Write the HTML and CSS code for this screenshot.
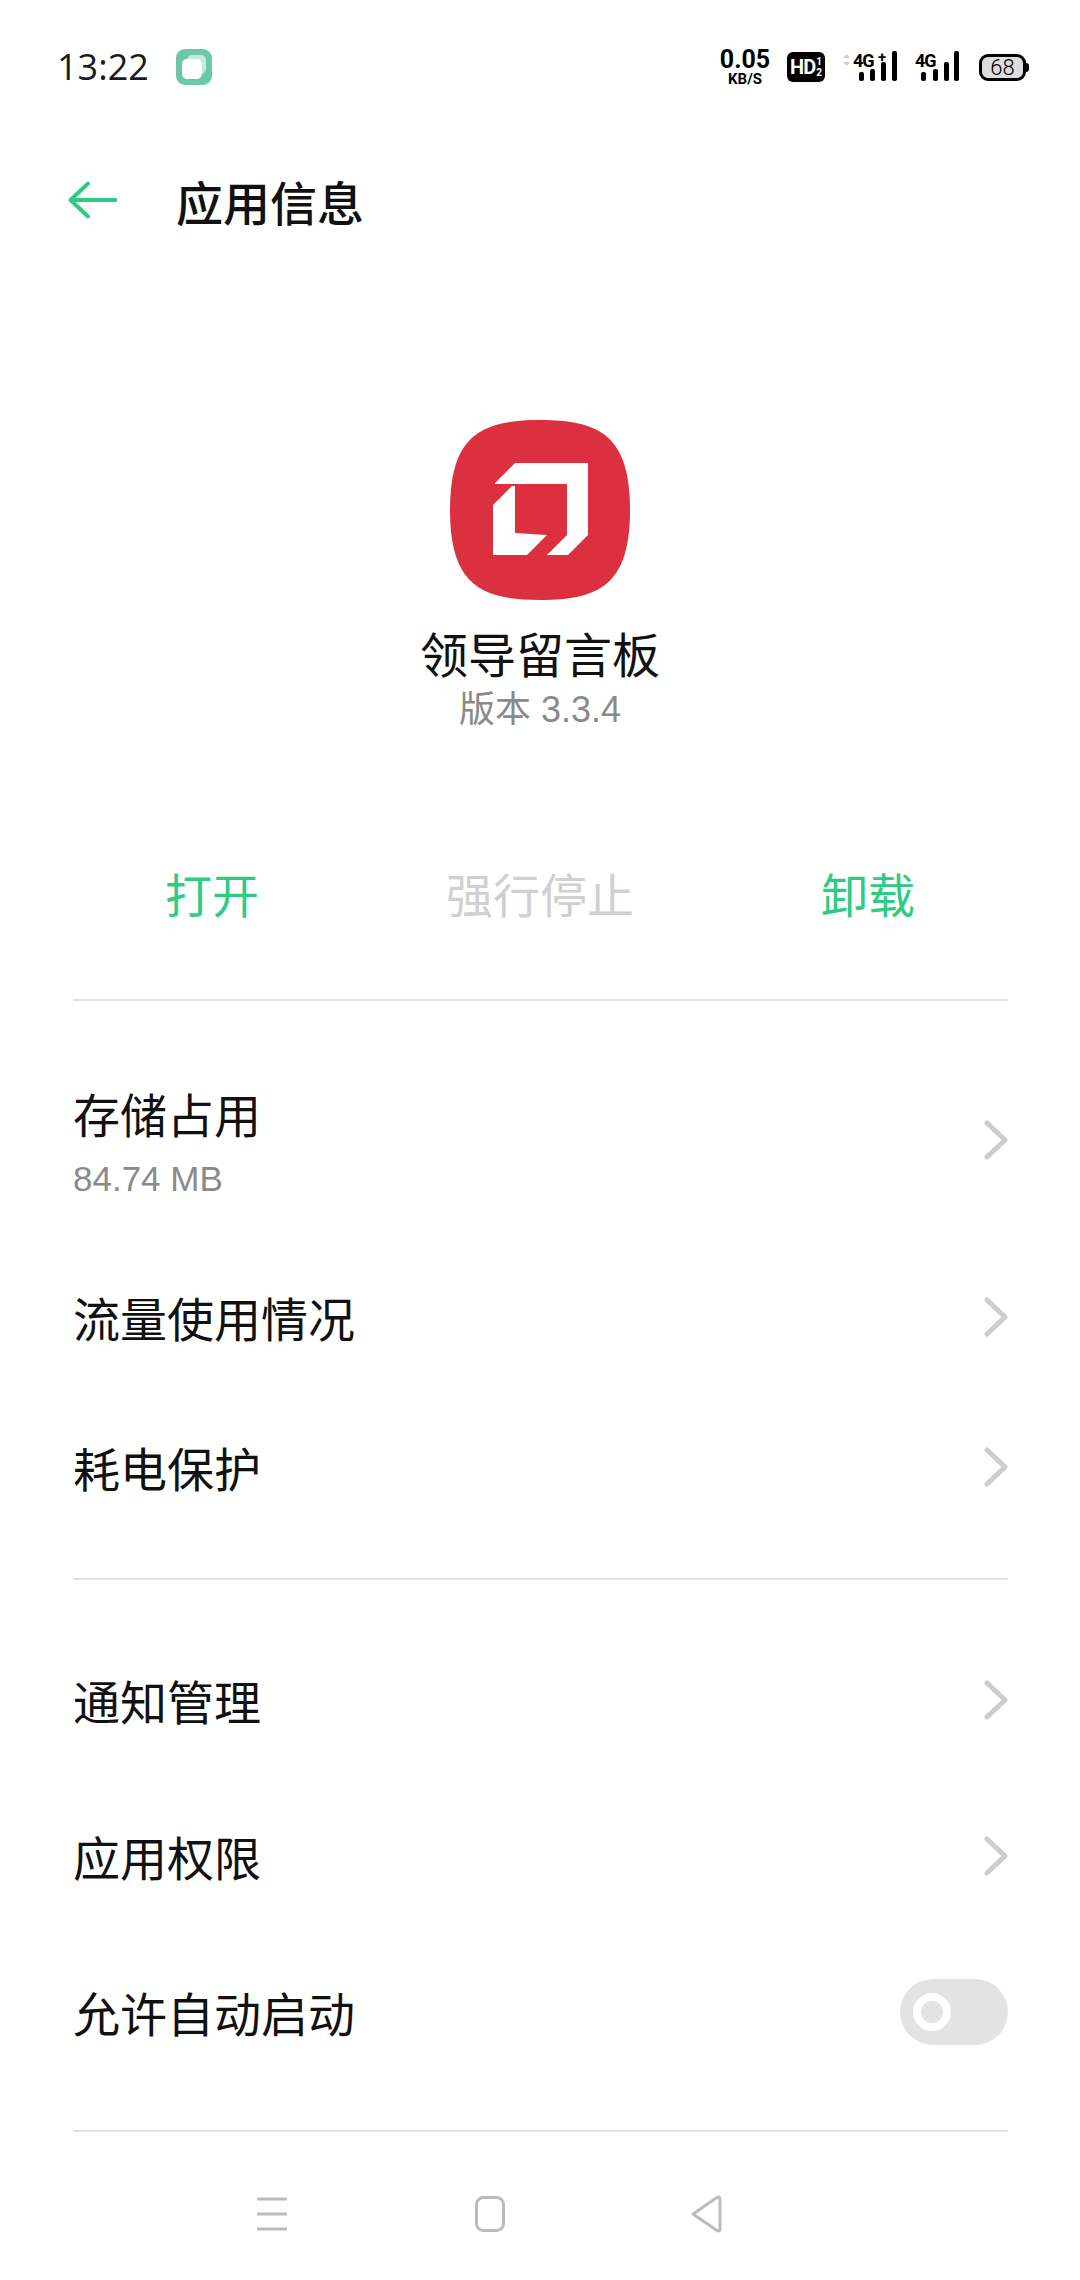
FILE: index.html
```html
<!DOCTYPE html>
<html lang="zh-CN">
<head>
    <meta charset="UTF-8">
    <meta name="viewport" content="width=device-width, initial-scale=1.0">
    <title>应用信息</title>
    <link rel="stylesheet" href="styles.css">
</head>
<body>

<div class="status">
    <div class="status-left">
        <span class="time">13:22</span>
        <svg class="notify" width="36" height="36" viewBox="0 0 36 36">
            <rect width="36" height="36" rx="9" fill="#6cc9a8"/>
            <rect x="11" y="6" width="19" height="19" rx="5" fill="#c5eadc"/>
            <rect x="6" y="10" width="20" height="20" rx="5" fill="#fff"/>
        </svg>
    </div>
    <div class="status-right">
        <div class="speed">
            <span class="speed-num">0.05</span>
            <span class="speed-unit">KB/S</span>
        </div>
        <div class="hd"><span>HD</span><span class="hd-frac"><i>1</i><i>2</i></span></div>
        <svg class="signal-one" width="56" height="32" viewBox="0 0 56 32">
            <path d="M1 7l3.5-4 3.5 4zM1 11l3.5 4 3.5-4z" fill="#ccc"/>
            <text x="11" y="16" class="net">4G</text>
            <text x="36" y="11" class="net plus">+</text>
            <rect x="17" y="21" width="5" height="9" rx="2"/>
            <rect x="28" y="18" width="5" height="12" rx="2"/>
            <rect x="39" y="11" width="5" height="19" rx="2"/>
            <rect x="50" y="0" width="5" height="30" rx="2"/>
        </svg>
        <svg class="signal-two" width="45" height="32" viewBox="0 0 45 32">
            <text x="0" y="16" class="net">4G</text>
            <rect x="6" y="21" width="5" height="9" rx="2"/>
            <rect x="18" y="18" width="5" height="12" rx="2"/>
            <rect x="29" y="11" width="5" height="19" rx="2"/>
            <rect x="39" y="0" width="5" height="30" rx="2"/>
        </svg>
        <div class="battery"><span>68</span></div>
    </div>
</div>

<header class="toolbar">
    <svg class="back" width="50" height="38" viewBox="0 0 50 38">
        <path d="M20 2.500L2.500 19L20 35.500M2.500 19H47.500" fill="none" stroke="#2ecb85" stroke-width="4" stroke-linecap="round" stroke-linejoin="round"/>
    </svg>
    <h1>应用信息</h1>
</header>

<section class="app-info">
    <svg class="app-icon" width="180" height="180" viewBox="0 0 180 180">
        <path d="M90 0C150 0 180 16 180 90C180 164 150 180 90 180C30 180 0 164 0 90C0 16 30 0 90 0Z" fill="#da3040"/>
        <path d="M45 63L65 43H138V115L118 135H97L117 115V64H45Z" fill="#fff"/>
        <path d="M43 85L62 66H65V113L97 115L77 135H43Z" fill="#fff"/>
    </svg>
    <div class="app-name">领导留言板</div>
    <div class="app-version">版本 3.3.4</div>
</section>

<div class="actions">
    <span class="action">打开</span>
    <span class="action disabled">强行停止</span>
    <span class="action">卸载</span>
</div>

<div class="group group-first">
    <div class="row row-storage">
        <div>
            <div class="label">存储占用</div>
            <div class="sub">84.74 MB</div>
        </div>
        <svg class="chevron" width="24" height="40" viewBox="0 0 24 40"><path d="M3 3L21 20L3 37"/></svg>
    </div>
    <div class="row row-traffic">
        <span class="label">流量使用情况</span>
        <svg class="chevron" width="24" height="40" viewBox="0 0 24 40"><path d="M3 3L21 20L3 37"/></svg>
    </div>
    <div class="row row-battery">
        <span class="label">耗电保护</span>
        <svg class="chevron" width="24" height="40" viewBox="0 0 24 40"><path d="M3 3L21 20L3 37"/></svg>
    </div>
</div>

<div class="group group-second">
    <div class="row">
        <span class="label">通知管理</span>
        <svg class="chevron" width="24" height="40" viewBox="0 0 24 40"><path d="M3 3L21 20L3 37"/></svg>
    </div>
    <div class="row">
        <span class="label">应用权限</span>
        <svg class="chevron" width="24" height="40" viewBox="0 0 24 40"><path d="M3 3L21 20L3 37"/></svg>
    </div>
    <div class="row">
        <span class="label">允许自动启动</span>
        <div class="toggle"><div class="knob"></div></div>
    </div>
</div>

<nav class="navbar">
    <svg width="30" height="34" viewBox="0 0 30 34"><path d="M0 2H30M0 17H30M0 32H30" fill="none" stroke="#bbb" stroke-width="3"/></svg>
    <svg width="30" height="36" viewBox="0 0 30 36"><rect x="1.500" y="1.500" width="27" height="33" rx="7" fill="none" stroke="#bbb" stroke-width="3"/></svg>
    <svg width="32" height="40" viewBox="0 0 32 40"><path d="M3 20L27 3.500Q30 2 30 5.500V34.500Q30 38 27 36.500Z" fill="none" stroke="#bbb" stroke-width="3" stroke-linejoin="round"/></svg>
</nav>

</body>
</html>
```

FILE: styles.css
```css
body {
    font-family: "Noto Sans CJK SC", "Noto Sans", sans-serif;
    margin: 0;
    padding: 0;
    background-color: #fff;
    color: #111;
    width: 1080px;
    height: 2280px;
    overflow: hidden;
}

/* status bar */
.status {
    height: 134px;
    padding: 0 54px 0 57px;
    display: flex;
    justify-content: space-between;
    align-items: center;
    box-sizing: border-box;
}
.status-left {
    display: flex;
    align-items: center;
}
.time {
    font-family: "Open Sans", sans-serif;
    font-size: 36px;
    line-height: 40px;
    width: 120px;
    color: #1a1a1a;
}
.notify {
    margin-left: -1px;
}
.status-right {
    display: flex;
    align-items: center;
    font-family: Roboto, sans-serif;
    color: #000;
}
.speed {
    display: flex;
    flex-direction: column;
    align-items: center;
    width: 48px;
    font-weight: 700;
}
.speed-num {
    font-size: 25px;
    line-height: 24px;
}
.speed-unit {
    font-size: 15px;
    line-height: 15px;
}
.hd {
    display: flex;
    align-items: center;
    justify-content: center;
    margin-left: 18px;
    width: 38px;
    height: 30px;
    background-color: #000;
    border-radius: 6px;
    color: #fff;
    font-size: 20px;
    font-weight: 700;
    letter-spacing: -1px;
}
.hd-frac {
    display: flex;
    flex-direction: column;
    margin-left: 1px;
    font-size: 10px;
    line-height: 11px;
    letter-spacing: 0;
}
.hd-frac i {
    font-style: normal;
}
.signal-one {
    margin-left: 17px;
}
.signal-two {
    margin-left: 17px;
}
.net {
    font-family: Roboto, sans-serif;
    font-size: 18px;
    font-weight: 700;
    letter-spacing: -1px;
}
.plus {
    font-size: 15px;
}
.battery {
    display: flex;
    align-items: center;
    justify-content: center;
    position: relative;
    margin-left: 19px;
    width: 47px;
    height: 27px;
    box-sizing: border-box;
    border: 3px solid #000;
    border-radius: 9px;
    background-color: #ddd;
    font-size: 22px;
    font-weight: 300;
}
.battery::after {
    content: "";
    position: absolute;
    right: -6px;
    top: 6px;
    width: 3px;
    height: 9px;
    background-color: #000;
    border-radius: 0 3px 3px 0;
}

/* toolbar */
.toolbar {
    height: 132px;
    padding-left: 68px;
    display: flex;
    align-items: center;
}
.toolbar h1 {
    margin: 0 0 0 58px;
    font-size: 47px;
    font-weight: 500;
    color: #111;
}

/* app header */
.app-info {
    padding-top: 154px;
    display: flex;
    flex-direction: column;
    align-items: center;
}
.app-icon {
    display: block;
}
.app-name {
    margin-top: 28px;
    font-size: 48px;
    line-height: 48px;
}
.app-version {
    margin-top: 14px;
    font-family: "Liberation Sans", "Noto Sans CJK SC", sans-serif;
    font-size: 36px;
    line-height: 40px;
    color: #8a8a8a;
}

.actions {
    margin-top: 112px;
    padding: 0 48px;
    height: 100px;
    display: grid;
    grid-template-columns: repeat(3, 1fr);
    align-items: center;
    text-align: center;
}
.action {
    font-size: 47px;
    color: #2ecb85;
}
.action.disabled {
    color: #d0d0d0;
}

/* rows */
.group {
    margin: 0 72px 0 73px;
    border-top: 2px solid #e2e2e2;
}
.group-first {
    margin-top: 57px;
    padding-bottom: 35px;
}
.group-second {
    padding-top: 42px;
    padding-bottom: 40px;
    border-bottom: 2px solid #e2e2e2;
}
.row {
    height: 156px;
    display: flex;
    justify-content: space-between;
    align-items: center;
}
.row-storage {
    height: 242px;
    padding-top: 92px;
    box-sizing: border-box;
    align-items: flex-start;
}
.row-storage .chevron {
    margin-top: 27px;
}
.row-traffic {
    height: 148px;
}
.row-battery {
    height: 152px;
}
.label {
    font-size: 47px;
    line-height: 40px;
    color: #111;
}
.sub {
    margin-top: 26px;
    font-family: "Liberation Sans", sans-serif;
    font-size: 35px;
    line-height: 40px;
    color: #8a8a8a;
}
.chevron path {
    fill: none;
    stroke: #cdcdcd;
    stroke-width: 5;
    stroke-linecap: round;
    stroke-linejoin: round;
}
.toggle {
    width: 108px;
    height: 66px;
    border-radius: 33px;
    background-color: #e3e3e3;
    display: flex;
    align-items: center;
    padding-left: 13px;
    box-sizing: border-box;
}
.knob {
    width: 38px;
    height: 38px;
    border-radius: 50%;
    background-color: #e3e3e3;
    border: 8px solid #fff;
    box-sizing: content-box;
    width: 22px;
    height: 22px;
}

/* nav bar */
.navbar {
    padding: 62px 0 0 257px;
    display: flex;
    align-items: center;
    gap: 188px;
}
.navbar svg:last-child {
    margin-left: -3px;
}
```
